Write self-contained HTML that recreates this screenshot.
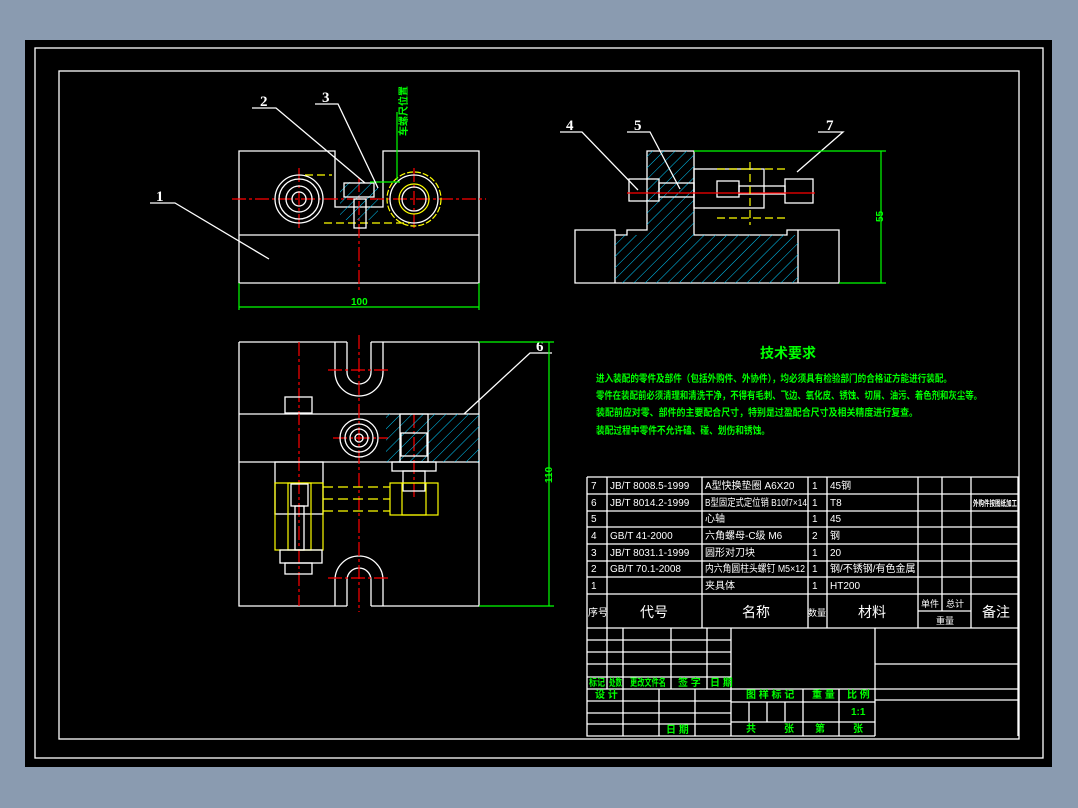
<!DOCTYPE html>
<html><head><meta charset="utf-8"><style>
html,body{margin:0;padding:0;background:#8a9bb0;width:1078px;height:808px;overflow:hidden}
svg{position:absolute;left:0;top:0}
text{font-family:"Liberation Sans","Noto Sans CJK SC",sans-serif}
.w{stroke:#fff;fill:none;stroke-width:1.3}
.y{stroke:#ff0;fill:none;stroke-width:1.2}
.r{stroke:#f00;fill:none;stroke-width:1.2}
.g{stroke:#0f0;fill:none;stroke-width:1.2}
.t{fill:#fff;font-size:10px}
.gt{fill:#0f0;font-size:10px;font-weight:bold}
.n{fill:#fff;font-size:15px;font-weight:bold;font-family:"Liberation Serif",serif}
</style></head><body>
<svg width="1078" height="808" viewBox="0 0 1078 808">
<defs>
<pattern id="hc" width="8" height="8" patternUnits="userSpaceOnUse" patternTransform="rotate(45)"><line x1="0" y1="0" x2="0" y2="8" stroke="#0cf" stroke-width="1"/></pattern>
<pattern id="hy" width="7" height="7" patternUnits="userSpaceOnUse" patternTransform="rotate(-45)"><line x1="0" y1="0" x2="0" y2="7" stroke="#ff0" stroke-width="1"/></pattern>
</defs>
<rect x="25" y="40" width="1027" height="727" fill="#000"/>
<rect x="35" y="48" width="1008" height="710" class="w"/>
<rect x="59" y="71" width="960" height="668" class="w"/>

<!-- top-left view -->
<path class="w" d="M239 151H335V207H383V151H479V283H239Z M239 235H479"/>
<path class="r" d="M232 199H486 M299 168V230 M414 168V230 M359 178V290" stroke-dasharray="14 3 3 3"/>
<circle cx="299" cy="199" r="24" class="w"/><circle cx="299" cy="199" r="20" class="w"/>
<circle cx="299" cy="199" r="13" class="w"/><circle cx="299" cy="199" r="7" class="w"/>
<circle cx="414" cy="199" r="24" class="w"/><circle cx="414" cy="199" r="27" class="y" stroke-dasharray="6 2"/>
<circle cx="414" cy="199" r="15" class="y"/><circle cx="414" cy="199" r="12" class="w"/>
<path class="y" d="M305 175H332 M324 223H410" stroke-dasharray="8 4"/>
<rect x="340" y="182" width="38" height="38" fill="url(#hc)"/>
<rect x="344" y="183" width="30" height="14" class="w"/>
<rect x="354" y="199" width="12" height="29" class="w" fill="#000"/>
<path class="g" d="M397 112V180 M370 182H400"/>
<text x="381" y="150" class="gt" transform="rotate(-90 387 130)" font-size="9">车螺尺位置</text>
<path class="w" stroke-width="1" d="M252 108H276L365 183 M315 104H338L378 188 M150 203H175L269 259"/>
<text x="260" y="106" class="n">2</text><text x="322" y="102" class="n">3</text><text x="156" y="201" class="n">1</text>
<path class="g" d="M239 283V310 M479 283V310 M239 307H479"/>
<text x="351" y="305" class="gt">100</text>

<!-- top-right view -->
<path class="w" d="M575 230H615V235H627V230H647V151H694V235H787V230H798V230H839V283H575Z M615 230V283 M798 230V283"/>
<path fill="url(#hc)" d="M615 235H647V151H694V235H798V283H615Z"/>
<rect x="694" y="169" width="70" height="39" class="w" fill="#000"/>
<rect x="717" y="181" width="22" height="16" class="w"/>
<rect x="629" y="179" width="30" height="22" class="w" fill="#222"/>
<rect x="659" y="183" width="35" height="14" class="w" fill="#000"/>
<rect x="785" y="179" width="28" height="24" class="w" fill="#222"/>
<rect x="739" y="186" width="46" height="8" class="w" fill="#000"/>
<path class="r" d="M627 193H815"/>
<path class="y" d="M750 162V225 M717 169H785 M717 218H785" stroke-dasharray="8 4"/>
<path class="w" stroke-width="1" d="M560 132H582L638 190 M627 132H650L680 189 M818 132H843L797 172"/>
<text x="566" y="130" class="n">4</text><text x="634" y="130" class="n">5</text><text x="826" y="130" class="n">7</text>
<path class="g" d="M694 151H886 M839 283H886 M881 151V283"/>
<text x="873" y="222" class="gt" transform="rotate(-90 878 217)">55</text>

<!-- bottom view -->
<path class="w" d="M239 342H347 M371 342H479V606H371 M347 606H239V342 M239 414H479 M239 462H479"/>
<path class="w" d="M335 342V372A24 24 0 0 0 383 372V342 M347 342V372A12 12 0 0 0 371 372V342"/>
<path class="w" d="M335 606V580A24 24 0 0 1 383 580V606 M347 606V580A12 12 0 0 1 371 580V606"/>
<path class="r" d="M359 335V612 M299 342V606 M328 370H390 M328 578H390 M333 438H388 M414 414V500" stroke-dasharray="14 3 3 3"/>
<circle cx="359" cy="438" r="19" class="w"/><circle cx="359" cy="438" r="14" class="w"/><circle cx="359" cy="438" r="9" class="w"/><circle cx="359" cy="438" r="4" class="w"/>
<path fill="url(#hc)" d="M386 414H479V462H386Z"/>
<rect x="400" y="414" width="28" height="48" fill="#000" class="w"/>
<rect x="401" y="433" width="26" height="23" class="w" fill="#222"/>
<rect x="392" y="462" width="44" height="9" class="w"/>
<rect x="403" y="471" width="22" height="20" class="w" fill="#222"/>
<rect x="390" y="483" width="48" height="32" class="y" fill="url(#hy)"/>
<rect x="402" y="483" width="24" height="32" class="y" fill="#000"/>
<path class="y" d="M323 487H390 M323 499H390 M323 511H390" stroke-dasharray="10 5"/>
<rect x="275" y="462" width="48" height="52" class="w"/>
<rect x="275" y="483" width="48" height="67" class="y" fill="url(#hy)"/>
<rect x="288" y="483" width="23" height="67" class="y" fill="#000"/>
<rect x="291" y="484" width="17" height="22" class="w" fill="#111"/>
<rect x="295" y="506" width="9" height="44" class="w"/>
<rect x="280" y="550" width="42" height="13" class="w" fill="#222"/>
<rect x="285" y="563" width="27" height="11" class="w" fill="#222"/>
<rect x="285" y="397" width="27" height="16" class="w" fill="#222"/>
<path class="w" stroke-width="1" d="M552 353H530L464 414"/>
<text x="536" y="351" class="n">6</text>
<path class="g" d="M479 342H554 M479 606H554 M549 342V606"/>
<text x="537" y="480" class="gt" transform="rotate(-90 546 474)">110</text>

<!-- tech requirements -->
<text x="760" y="358" fill="#0f0" font-size="14" font-weight="bold">技术要求</text>
<g class="gt" font-size="8.2">
<text x="596" y="382" textLength="356" lengthAdjust="spacingAndGlyphs">进入装配的零件及部件（包括外购件、外协件），均必须具有检验部门的合格证方能进行装配。</text>
<text x="596" y="399" textLength="386" lengthAdjust="spacingAndGlyphs">零件在装配前必须清理和清洗干净，不得有毛刺、飞边、氧化皮、锈蚀、切屑、油污、着色剂和灰尘等。</text>
<text x="596" y="416" textLength="322" lengthAdjust="spacingAndGlyphs">装配前应对零、部件的主要配合尺寸，特别是过盈配合尺寸及相关精度进行复查。</text>
<text x="596" y="434" textLength="174" lengthAdjust="spacingAndGlyphs">装配过程中零件不允许磕、碰、划伤和锈蚀。</text>
</g>

<!-- title block -->
<g class="w" stroke-width="1.2">
<path d="M587 477H1018V736 M587 477V736H875 M587 494H1018 M587 511H1018 M587 527H1018 M587 544H1018 M587 561H1018 M587 577H1018 M587 594H1018 M587 628H1018 M918 611H971"/>
<path d="M607 477V628 M702 477V628 M808 477V628 M827 477V628 M918 477V628 M942 477V611 M971 477V628"/>
<path d="M587 640H731 M587 652H731 M587 664H731 M587 677H731 M587 689H1018 M587 701H731 M587 713H731 M587 724H731 M731 702H875 M731 722H875 M875 664H1018 M875 700H1018"/>
<path d="M607 628V689 M623 628V736 M671 628V689 M707 628V689 M731 628V736 M875 628V736 M659 689V736 M695 689V736 M803 689V736 M839 689V736 M749 702V722 M767 702V722 M785 702V722"/>
</g>
<g class="t" font-size="9">
<text x="591" y="489">7</text><text x="610" y="489">JB/T 8008.5-1999</text><text x="705" y="489">A型快换垫圈 A6X20</text><text x="812" y="489">1</text><text x="830" y="489">45钢</text>
<text x="591" y="506">6</text><text x="610" y="506">JB/T 8014.2-1999</text><text x="705" y="506" textLength="102" lengthAdjust="spacingAndGlyphs">B型固定式定位销 B10f7×14</text><text x="812" y="506">1</text><text x="830" y="506">T8</text><text x="973" y="506" font-size="8" font-weight="bold" textLength="44" lengthAdjust="spacingAndGlyphs">外购件按图纸加工</text>
<text x="591" y="522">5</text><text x="705" y="522">心轴</text><text x="812" y="522">1</text><text x="830" y="522">45</text>
<text x="591" y="539">4</text><text x="610" y="539">GB/T 41-2000</text><text x="705" y="539">六角螺母-C级 M6</text><text x="812" y="539">2</text><text x="830" y="539">钢</text>
<text x="591" y="556">3</text><text x="610" y="556">JB/T 8031.1-1999</text><text x="705" y="556">圆形对刀块</text><text x="812" y="556">1</text><text x="830" y="556">20</text>
<text x="591" y="572">2</text><text x="610" y="572">GB/T 70.1-2008</text><text x="705" y="572" textLength="100" lengthAdjust="spacingAndGlyphs">内六角圆柱头螺钉 M5×12</text><text x="812" y="572">1</text><text x="830" y="572">钢/不锈钢/有色金属</text>
<text x="591" y="589">1</text><text x="705" y="589">夹具体</text><text x="812" y="589">1</text><text x="830" y="589">HT200</text>
<text x="588" y="616" font-size="10">序号</text><text x="640" y="617" font-size="14">代号</text><text x="742" y="617" font-size="14">名称</text><text x="808" y="616" font-size="9">数量</text><text x="858" y="617" font-size="14">材料</text>
<text x="921" y="607" font-size="9">单件</text><text x="946" y="607" font-size="9">总计</text><text x="936" y="624" font-size="9">重量</text><text x="982" y="617" font-size="14">备注</text>
</g>
<g class="gt" font-size="7">
<text x="589" y="686" textLength="16" lengthAdjust="spacingAndGlyphs">标记</text><text x="609" y="686" textLength="13" lengthAdjust="spacingAndGlyphs">处数</text><text x="630" y="686" textLength="36" lengthAdjust="spacingAndGlyphs">更改文件名</text><text x="678" y="686">签 字</text><text x="710" y="686">日 期</text>
<text x="595" y="698">设 计</text><text x="666" y="733">日 期</text>
<text x="746" y="698">图 样 标 记</text><text x="812" y="698">重 量</text><text x="847" y="698">比 例</text><text x="851" y="715">1:1</text>
<text x="746" y="732">共</text><text x="784" y="732">张</text><text x="815" y="732">第</text><text x="853" y="732">张</text>
</g>
</svg>
</body></html>
